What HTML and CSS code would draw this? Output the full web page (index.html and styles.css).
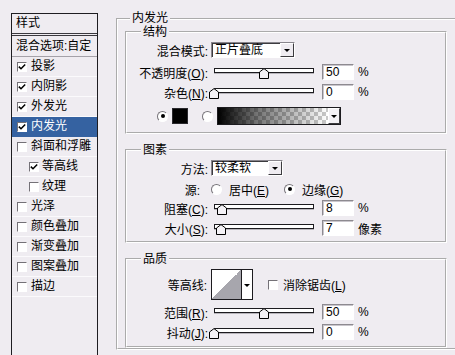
FILE: index.html
```html
<!DOCTYPE html>
<html lang="zh-CN">
<head>
<meta charset="utf-8">
<title>图层样式 - 内发光</title>
<link rel="stylesheet" href="styles.css">
</head>
<body>
<div class="page">
  <div class="list">
    <div class="list-head">样式</div>
    <div class="list-blend">混合选项:自定</div>
    <div class="item"><span class="cb"><svg width="8" height="8" viewBox="0 0 8 8"><path d="M0.8 3.6 L3 5.8 L7.2 1.4" fill="none" stroke="#000" stroke-width="1.5"/></svg></span>投影</div>
    <div class="item"><span class="cb"><svg width="8" height="8" viewBox="0 0 8 8"><path d="M0.8 3.6 L3 5.8 L7.2 1.4" fill="none" stroke="#000" stroke-width="1.5"/></svg></span>内阴影</div>
    <div class="item"><span class="cb"><svg width="8" height="8" viewBox="0 0 8 8"><path d="M0.8 3.6 L3 5.8 L7.2 1.4" fill="none" stroke="#000" stroke-width="1.5"/></svg></span>外发光</div>
    <div class="item sel"><span class="cb"><svg width="8" height="8" viewBox="0 0 8 8"><path d="M0.8 3.6 L3 5.8 L7.2 1.4" fill="none" stroke="#000" stroke-width="1.5"/></svg></span>内发光</div>
    <div class="item"><span class="cb"></span>斜面和浮雕</div>
    <div class="item sub"><span class="cb"><svg width="8" height="8" viewBox="0 0 8 8"><path d="M0.8 3.6 L3 5.8 L7.2 1.4" fill="none" stroke="#000" stroke-width="1.5"/></svg></span>等高线</div>
    <div class="item sub"><span class="cb"></span>纹理</div>
    <div class="item"><span class="cb"></span>光泽</div>
    <div class="item"><span class="cb"></span>颜色叠加</div>
    <div class="item"><span class="cb"></span>渐变叠加</div>
    <div class="item"><span class="cb"></span>图案叠加</div>
    <div class="item"><span class="cb"></span>描边</div>
  </div>

  <fieldset class="panel">
    <legend>内发光</legend>

    <fieldset class="grp g1">
      <legend>结构</legend>
      <div class="row r1">
        <span class="lbl">混合模式:</span>
        <div class="select w84"><span class="val">正片叠底</span><span class="btn"><i class="tri"></i></span></div>
      </div>
      <div class="row r2">
        <span class="lbl">不透明度(<u>O</u>):</span>
        <div class="slider"><div class="track"></div><svg class="thumb" style="left:50%" width="10" height="11" viewBox="0 0 10 11"><path d="M0.5 10.5 V4 L5 0.6 L9.5 4 V10.5 Z" fill="#f4f2f6" stroke="#000"/></svg></div>
        <div class="num">50</div><span class="unit">%</span>
      </div>
      <div class="row r3">
        <span class="lbl">杂色(<u>N</u>):</span>
        <div class="slider"><div class="track"></div><svg class="thumb" style="left:0%" width="10" height="11" viewBox="0 0 10 11"><path d="M0.5 10.5 V4 L5 0.6 L9.5 4 V10.5 Z" fill="#f4f2f6" stroke="#000"/></svg></div>
        <div class="num">0</div><span class="unit">%</span>
      </div>
      <div class="row r4">
        <span class="radio on"></span>
        <span class="swatch"></span>
        <span class="radio r-grad"></span>
        <div class="grad"><span class="grad-fill"></span><span class="btn"><i class="tri"></i></span></div>
      </div>
    </fieldset>

    <fieldset class="grp g2">
      <legend>图素</legend>
      <div class="row r1">
        <span class="lbl">方法:</span>
        <div class="select w72"><span class="val">较柔软</span><span class="btn"><i class="tri"></i></span></div>
      </div>
      <div class="row r2">
        <span class="lbl lbl-src">源:</span>
        <span class="radio"></span><span class="opt">居中(<u>E</u>)</span>
        <span class="radio on"></span><span class="opt2">边缘(<u>G</u>)</span>
      </div>
      <div class="row r3">
        <span class="lbl">阻塞(<u>C</u>):</span>
        <div class="slider"><div class="track"></div><svg class="thumb" style="left:8%" width="10" height="11" viewBox="0 0 10 11"><path d="M0.5 10.5 V4 L5 0.6 L9.5 4 V10.5 Z" fill="#f4f2f6" stroke="#000"/></svg></div>
        <div class="num">8</div><span class="unit">%</span>
      </div>
      <div class="row r4">
        <span class="lbl">大小(<u>S</u>):</span>
        <div class="slider"><div class="track"></div><svg class="thumb" style="left:7%" width="10" height="11" viewBox="0 0 10 11"><path d="M0.5 10.5 V4 L5 0.6 L9.5 4 V10.5 Z" fill="#f4f2f6" stroke="#000"/></svg></div>
        <div class="num">7</div><span class="unit">像素</span>
      </div>
    </fieldset>

    <fieldset class="grp g3">
      <legend>品质</legend>
      <div class="row r1">
        <span class="lbl lbl-contour">等高线:</span>
        <div class="contour"><span class="curve"></span><span class="cbtn"><i class="tri"></i></span></div>
        <span class="cb cb-aa"></span><span class="aa">消除锯齿(<u>L</u>)</span>
      </div>
      <div class="row r2">
        <span class="lbl">范围(<u>R</u>):</span>
        <div class="slider"><div class="track"></div><svg class="thumb" style="left:50%" width="10" height="11" viewBox="0 0 10 11"><path d="M0.5 10.5 V4 L5 0.6 L9.5 4 V10.5 Z" fill="#f4f2f6" stroke="#000"/></svg></div>
        <div class="num">50</div><span class="unit">%</span>
      </div>
      <div class="row r3">
        <span class="lbl">抖动(<u>J</u>):</span>
        <div class="slider"><div class="track"></div><svg class="thumb" style="left:0%" width="10" height="11" viewBox="0 0 10 11"><path d="M0.5 10.5 V4 L5 0.6 L9.5 4 V10.5 Z" fill="#f4f2f6" stroke="#000"/></svg></div>
        <div class="num">0</div><span class="unit">%</span>
      </div>
    </fieldset>
  </fieldset>
</div>
</body>
</html>
```

FILE: styles.css
```css
* { box-sizing: border-box; }
html, body { margin: 0; padding: 0; }
body {
  background: #efecf1;
  font-family: "Liberation Sans", "Noto Sans CJK SC", sans-serif;
  font-size: 12px;
  color: #000;
  width: 455px;
  height: 355px;
  overflow: hidden;
}
u { text-decoration: underline; text-underline-offset: 1px; }

.page { display: flex; align-items: flex-start; height: 355px; overflow: hidden; }

/* ---------- style list ---------- */
.list {
  flex: none;
  margin: 13px 0 0 11px;
  width: 87px;
  height: 342px;
  border: 1px solid #1e1d21;
  border-bottom: none;
}
.list-head {
  height: 22px;
  line-height: 19px;
  padding-left: 4px;
  border-bottom: 3px double #3a383e;
}
.list-blend {
  height: 21px;
  line-height: 20px;
  padding-left: 4px;
  border-bottom: 1px solid #a4a1a8;
  white-space: nowrap;
}
.item {
  height: 20px;
  display: flex;
  align-items: center;
  padding-left: 5px;
  border-bottom: 1px solid #fbfafc;
  white-space: nowrap;
  line-height: 19px;
}
.item .cb { margin-right: 4px; }
.item.sub { padding-left: 17px; }
.item.sub .cb { margin-right: 3px; }
.item.sel { background: #3562a1; color: #fff; border-bottom-color: #3562a1; }

.cb {
  flex: none;
  width: 10px;
  height: 10px;
  border: 1px solid;
  border-color: #747177 #fff #fff #747177;
  background: #fff;
  display: flex;
  align-items: center;
  justify-content: center;
}

/* ---------- group boxes ---------- */
fieldset { min-inline-size: 0; }
.panel {
  flex: none;
  margin: 12px 0 0 18px;
  width: 345px;
  padding: 0 0 0 7px;
  border: 2px groove #fff;
}
.panel > legend {
  padding: 0 2px;
  margin-left: 5px;
  line-height: 13px;
}
.grp {
  margin: 0;
  width: 322px;
  padding: 0;
  border: 2px groove #fff;
}
.grp > legend {
  padding: 0 2px;
  margin-left: 14px;
  line-height: 14px;
}
.g1 { padding-bottom: 7px; }
.g2 { margin-top: 9px; padding-bottom: 5px; }
.g3 { margin-top: 9px; padding-bottom: 6px; }

/* ---------- rows ---------- */
.row { display: flex; align-items: center; height: 16px; white-space: nowrap; }
.lbl {
  flex: none;
  width: 84px;
  text-align: right;
  padding-right: 3px;
}
.g1 .r1 { margin-top: 3px; }
.g1 .r2 { margin-top: 6px; }
.g1 .r3 { margin-top: 4px; }
.g1 .r4 { margin-top: 7px; height: 18px; padding-left: 30px; }

.g2 .r1 { margin-top: 3px; }
.g2 .r2 { margin-top: 5px; }
.g2 .r3 { margin-top: 3px; }
.g2 .r4 { margin-top: 4px; }

.g3 .r1 { margin-top: 3px; height: 31px; }
.g3 .r2 { margin-top: 4px; }
.g3 .r3 { margin-top: 4px; }

/* select */
.select {
  flex: none;
  display: flex;
  height: 16px;
  border: 1px solid;
  border-color: #88858c #fff #fff #88858c;
  background: #fff;
  box-shadow: inset 1px 1px 0 #3c3b3f;
}
.w84 { width: 84px; }
.w72 { width: 72px; }
.select .val { flex: 1; padding-left: 3px; line-height: 14px; }
.btn {
  flex: none;
  width: 14px;
  border: 1px solid;
  border-color: #fff #3c3b3f #3c3b3f #fff;
  background: #efecf1;
  display: flex;
  align-items: center;
  justify-content: center;
}
.tri {
  width: 0; height: 0;
  border-left: 3px solid transparent;
  border-right: 3px solid transparent;
  border-top: 3px solid #000;
  margin-top: 1px;
}

/* slider */
.slider {
  flex: none;
  position: relative;
  width: 100px;
  height: 16px;
  margin-left: 3px;
}
.track {
  margin-top: 4px;
  height: 5px;
  border: 1px solid #1c1b1f;
  background: #fff;
  box-shadow: 0 1px 0 #b8b5bb;
}
.thumb { position: absolute; top: 4px; margin-left: -5px; }

.num {
  flex: none;
  width: 32px;
  height: 16px;
  margin-left: 8px;
  border: 1px solid;
  border-color: #8d8a90 #fff #fff #8d8a90;
  box-shadow: inset 1px 1px 0 #c9c6cc;
  background: #fff;
  padding-left: 3px;
  font-family: "Liberation Sans", Arial, sans-serif;
  font-size: 12px;
  line-height: 14px;
}
.unit { margin-left: 4px; }

/* radios & swatches */
.radio {
  flex: none;
  position: relative;
  width: 11px;
  height: 11px;
  border-radius: 50%;
  border: 1px solid;
  border-color: #77747a #fff #fff #77747a;
  background: #fff;
}
.radio.on::after {
  content: "";
  position: absolute;
  left: 2.5px; top: 2.5px;
  width: 4px; height: 4px;
  border-radius: 50%;
  background: #000;
}
.swatch {
  flex: none;
  width: 16px;
  height: 16px;
  margin-left: 4px;
  background: #000;
  border: 1px solid #2a292d;
}
.r-grad { margin-left: 14px; }
.grad {
  flex: none;
  display: flex;
  width: 124px;
  height: 18px;
  margin-left: 4px;
  border: 1px solid #1c1b1f;
}
.grad-fill {
  flex: 1;
  background:
    linear-gradient(to right, #000 0%, rgba(0,0,0,0.55) 35%, rgba(0,0,0,0) 100%),
    repeating-conic-gradient(#c9c9c9 0 25%, #fff 0 50%) 0 0 / 8px 8px;
}
.grad .btn { width: 12px; background: #f4f2f6; }

.lbl-src { padding-right: 11px; }
.g2 .r2 .radio:first-of-type { margin-left: -2px; }
.opt { width: 55px; margin-left: 7px; }
.opt2 { margin-left: 7px; }

/* contour */
.lbl-contour { padding-right: 4px; }
.contour {
  flex: none;
  display: flex;
  width: 42px;
  height: 31px;
  border: 1px solid #1c1b1f;
  background: #fff;
}
.curve {
  flex: 1;
  background: linear-gradient(to bottom right, #fff 50%, #a7a6ad 50%);
  border-right: 1px solid #1c1b1f;
}
.cbtn {
  flex: none;
  width: 10px;
  display: flex;
  align-items: center;
  justify-content: center;
  background: #fff;
}
.cb-aa { margin-left: 15px; }
.aa { margin-left: 5px; }
```
